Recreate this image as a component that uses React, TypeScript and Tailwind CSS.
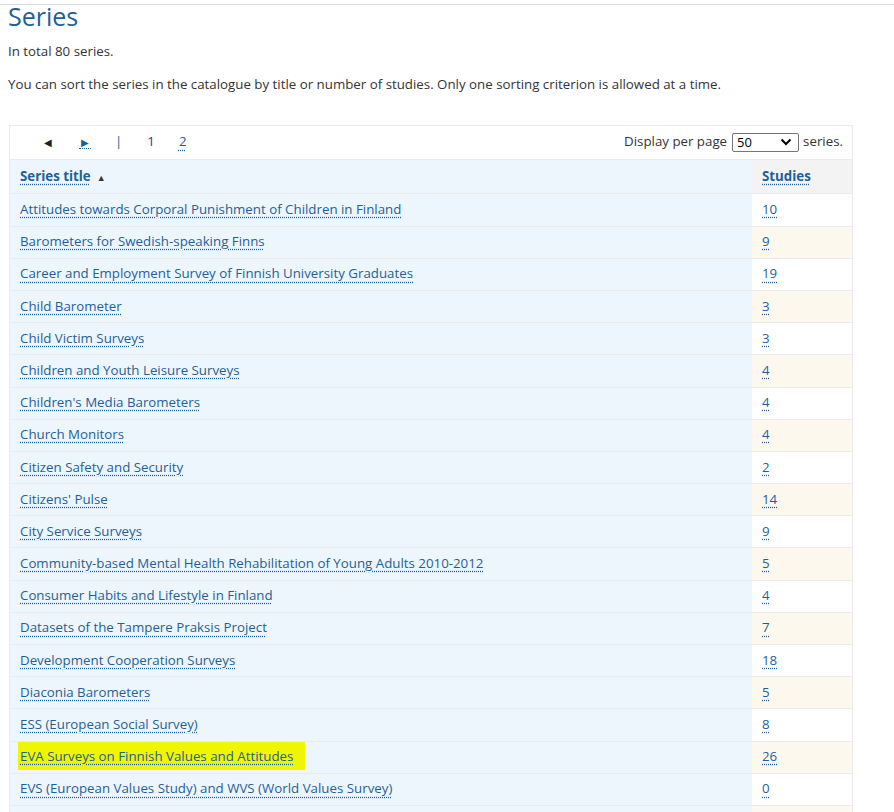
const rows: [string, number][] = [
  ["Attitudes towards Corporal Punishment of Children in Finland", 10],
  ["Barometers for Swedish-speaking Finns", 9],
  ["Career and Employment Survey of Finnish University Graduates", 19],
  ["Child Barometer", 3],
  ["Child Victim Surveys", 3],
  ["Children and Youth Leisure Surveys", 4],
  ["Children's Media Barometers", 4],
  ["Church Monitors", 4],
  ["Citizen Safety and Security", 2],
  ["Citizens' Pulse", 14],
  ["City Service Surveys", 9],
  ["Community-based Mental Health Rehabilitation of Young Adults 2010-2012", 5],
  ["Consumer Habits and Lifestyle in Finland", 4],
  ["Datasets of the Tampere Praksis Project", 7],
  ["Development Cooperation Surveys", 18],
  ["Diaconia Barometers", 5],
  ["ESS (European Social Survey)", 8],
  ["EVA Surveys on Finnish Values and Attitudes", 26],
  ["EVS (European Values Study) and WVS (World Values Survey)", 0],
];

const link =
  "text-[#1f5f99] underline decoration-dotted decoration-[#1f5f99] underline-offset-[3px]";

export default function App() {
  return (
    <div className="h-[812px] overflow-hidden bg-white font-['Open_Sans',sans-serif] text-[13.3px] text-[#333]">
      <div className="mt-1 border-t border-[#dcdcdc]" />
      <div className="px-2">
        <h1 className="text-[25px] leading-[22px] text-[#1f5f99]">Series</h1>
        <p className="mt-[15px]">In total 80 series.</p>
        <p className="mt-[13px]">
          You can sort the series in the catalogue by title or number of studies. Only one sorting
          criterion is allowed at a time.
        </p>

        <div className="mt-[30px] ml-px w-[844px] border border-[#ebebeb]">
          {/* pager + per page */}
          <div className="flex h-[34px] items-center border-b border-[#ebebeb] pr-[9px]">
            <div className="ml-[34px] flex items-center">
              <span className="text-[10px] text-[#222]">◀</span>
              <span className="ml-[27px] border-b border-dotted border-[#1f5f99] px-[2px] text-[10px] leading-[12px] text-[#1f5f99]">
                ▶
              </span>
              <span className="ml-[24px] text-[#1f5f99]">|</span>
              <span className="ml-[25px] text-[#5b2a86]">1</span>
              <span className={`ml-[24px] ${link}`}>2</span>
            </div>
            <div className="ml-auto flex items-center">
              <span>Display per page</span>
              <div className="ml-[5px] flex h-[19px] w-[67px] items-center justify-between rounded-[2px] border border-[#767676] pl-[4px] pr-[6px] text-[13px] text-black">
                <span>50</span>
                <svg width="12" height="8" viewBox="0 0 12 8">
                  <path d="M1.5 1.5 6 6l4.5-4.5" fill="none" stroke="#000" strokeWidth="2" />
                </svg>
              </div>
              <span className="ml-[4px]">series.</span>
            </div>
          </div>

          <table className="w-full border-collapse">
            <thead>
              <tr className="h-[34px] border-b border-[#ebebeb]">
                <th className="bg-[#eef6fd] pl-[10px] text-left font-bold">
                  <span className={link}>Series title</span>
                  <span className="ml-[6px] text-[9px] text-[#333]">▲</span>
                </th>
                <th className="w-[100px] bg-[#f3f3f3] pl-[10px] text-left font-bold">
                  <span className={link}>Studies</span>
                </th>
              </tr>
            </thead>
            <tbody>
              {rows.map(([title, n], i) => (
                <tr key={title} className="h-[32.2px] border-b border-[#ebebeb]">
                  <td className="bg-[#eef6fd] pl-[10px]">
                    {title.startsWith("EVA") ? (
                      <span className="-ml-[2px] bg-[#f0f500] py-[5px] pl-[2px] pr-[12px]">
                        <span className={link}>{title}</span>
                      </span>
                    ) : (
                      <span className={link}>{title}</span>
                    )}
                  </td>
                  <td className={`pl-[10px] ${i % 2 === 1 ? "bg-[#fcf8ed]" : "bg-white"}`}>
                    <span className={link}>{n}</span>
                  </td>
                </tr>
              ))}
              {/* next row, cut by the window */}
              <tr className="h-[32.2px]">
                <td className="bg-[#eef6fd]" />
                <td className="bg-[#fcf8ed]" />
              </tr>
            </tbody>
          </table>
        </div>
      </div>
    </div>
  );
}
